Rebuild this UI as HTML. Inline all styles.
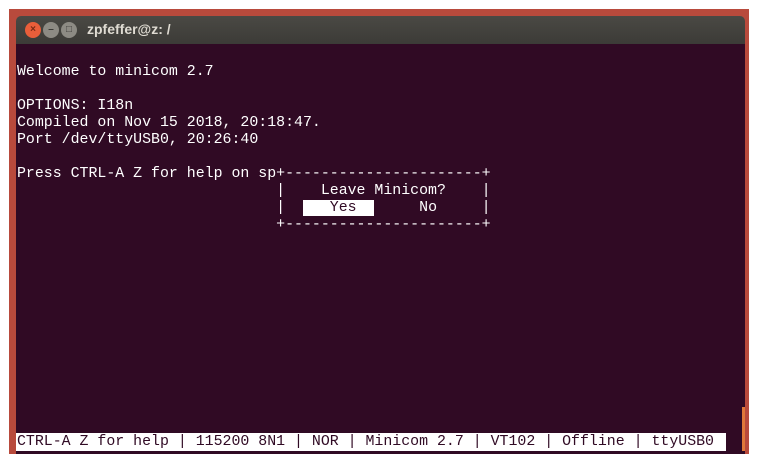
<!DOCTYPE html>
<html><head><meta charset="utf-8"><style>
body{margin:0;width:769px;height:473px;background:#fff;position:relative;overflow:hidden}
.red{position:absolute;left:9px;top:9px;width:740px;height:445px;background:#b84a3c}
.tb{position:absolute;left:16px;top:16px;width:729px;height:28px;background:linear-gradient(#4a4944,#3c3b37);border-radius:5px 5px 0 0}
.term{position:absolute;left:16px;top:44px;width:729px;height:410px;background:#300a24}
.btn{position:absolute;top:22px;width:16px;height:16px;border-radius:50%;font:bold 10px "Liberation Sans",sans-serif;text-align:center;line-height:16px}
.title{position:absolute;left:87px;top:21px;font:bold 14px "Liberation Sans",sans-serif;color:#dfdbd2}
pre{position:absolute;left:17px;top:64px;margin:0;font:14.9px/17px "Liberation Mono",monospace;color:#fff}
.hl{background:#fff;color:#300a24}
.status{position:absolute;left:16px;top:433px;width:709px;height:18px;background:#fff;color:#300a24;font:14.9px/18px "Liberation Mono",monospace;white-space:pre;padding-left:1px}
.sb{position:absolute;left:742px;top:407px;width:3px;height:44px;background:#e0783a}
</style></head><body>
<div class="red"></div>
<div class="tb"></div>
<div class="btn" style="left:25px;background:#e95e3a;color:#7a2a14">×</div>
<div class="btn" style="left:43px;background:#8d8b84;color:#3c3b37">–</div>
<div class="btn" style="left:61px;background:#8d8b84;color:#3c3b37">□</div>
<div class="title">zpfeffer@z: /</div>
<div class="term"></div>
<pre>Welcome to minicom 2.7

OPTIONS: I18n
Compiled on Nov 15 2018, 20:18:47.
Port /dev/ttyUSB0, 20:26:40

Press CTRL-A Z for help on sp+----------------------+
                             |    Leave Minicom?    |
                             |  <span class="hl">   Yes  </span>     No     |
                             +----------------------+</pre>
<div class="status">CTRL-A Z for help | 115200 8N1 | NOR | Minicom 2.7 | VT102 | Offline | ttyUSB0</div>
<div class="sb"></div>
</body></html>
